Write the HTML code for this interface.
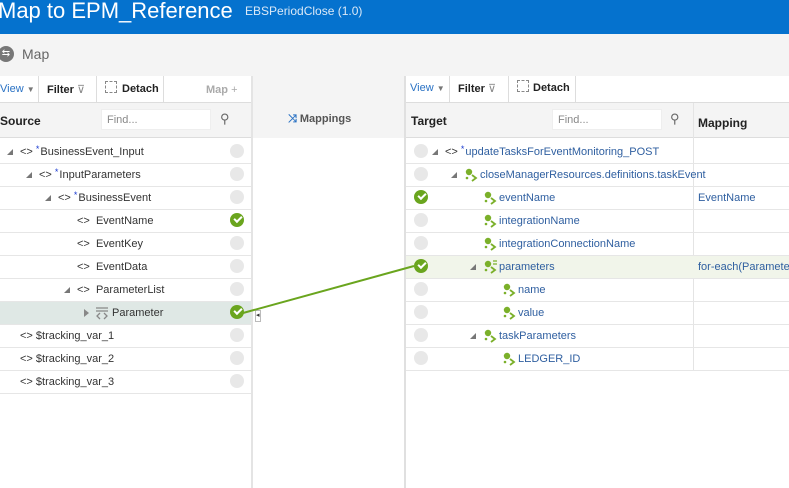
<!DOCTYPE html>
<html><head><style>
*{box-sizing:border-box;margin:0;padding:0}
body{width:789px;height:488px;overflow:hidden;background:#fff;font-family:"Liberation Sans",sans-serif;font-size:11px;color:#333;position:relative}
.a{position:absolute}
.hdr{left:0;top:0;width:789px;height:34px;background:#0572ce}
.row{position:absolute;height:23px;border-bottom:1px solid #e6e6e6}
.c{position:absolute;width:14px;height:14px;border-radius:50%;background:#e8e8e8}
.ok{background:#6aa51e}
.ok:after{content:"";position:absolute;left:4px;top:3px;width:6px;height:3px;border-left:2px solid #fff;border-bottom:2px solid #fff;transform:rotate(-45deg)}
.t{position:absolute;top:5px;white-space:nowrap}
.tri{position:absolute;top:8px;width:0;height:0;border-left:6px solid transparent;border-bottom:6px solid #777}
.b{color:#2f5fa0}
.st{color:#1a3bd1;font-size:9px;position:relative;top:-3px;margin-right:1px}
.gi{position:absolute;top:4px}
</style></head><body>
<svg width="0" height="0" style="position:absolute"><defs>
<g id="g"><circle cx="5" cy="4" r="3.2" fill="#7bb02a"/><circle cx="3" cy="10" r="1.3" fill="#7bb02a"/><path d="M8 7 L12 10 L8 13" fill="none" stroke="#7bb02a" stroke-width="1.8"/></g>
</defs></svg>
<div class="a hdr"></div>
<div class="a" style="left:-2px;top:-2px;color:#fff;font-size:22px">Map to EPM_Reference</div>
<div class="a" style="left:245px;top:4px;color:#dbe9f7;font-size:12px">EBSPeriodClose (1.0)</div>
<div class="a" style="left:0;top:34px;width:789px;height:42px;background:#f4f4f4"></div>
<div class="a" style="left:-2px;top:46px;width:16px;height:16px;border-radius:50%;background:#777;color:#fff;font-size:10px;text-align:center;line-height:16px">⇆</div>
<div class="a" style="left:22px;top:46px;font-size:14px;color:#666">Map</div>
<!-- left toolbar -->
<div class="a" style="left:0;top:76px;width:252px;height:27px;background:#fff;border-bottom:1px solid #ddd"></div>
<div class="a" style="left:0;top:83px;color:#2a72c4">View <span style="color:#777;font-size:8px">▼</span></div>
<div class="a" style="left:38px;top:76px;width:1px;height:27px;background:#ddd"></div>
<div class="a" style="left:47px;top:83px;font-weight:bold;color:#222">Filter <span style="color:#888;font-weight:normal">⊽</span></div>
<div class="a" style="left:96px;top:76px;width:1px;height:27px;background:#ddd"></div>
<div class="a" style="left:105px;top:81px;width:12px;height:12px;border:1px dashed #888"></div>
<div class="a" style="left:122px;top:83px;font-weight:bold;color:#222">Detach</div>
<div class="a" style="left:163px;top:76px;width:1px;height:27px;background:#ddd"></div>
<div class="a" style="left:206px;top:84px;font-weight:bold;color:#aaa">Map <span style="font-weight:normal">+</span></div>
<div class="a" style="left:0;top:103px;width:252px;height:35px;background:#f4f4f4;border-bottom:1px solid #ddd"></div>
<div class="a" style="left:0;top:114px;font-weight:bold;color:#222;font-size:12px">Source</div>
<div class="a" style="left:101px;top:109px;width:110px;height:21px;background:#fff;border:1px solid #eee;padding:4px 5px;color:#888">Find...</div>
<div class="a" style="left:220px;top:111px;color:#666;font-size:13px">⚲</div>
<div class="a" style="left:251px;top:76px;width:2px;height:412px;background:#e4e4e4"></div>
<!-- middle -->
<div class="a" style="left:253px;top:76px;width:152px;height:62px;background:#f4f4f4"></div>
<div class="a" style="left:288px;top:113px;font-weight:bold;color:#555"><span style="color:#2a72c4">⤨</span> Mappings</div>
<div class="a" style="left:404px;top:76px;width:2px;height:412px;background:#e0e0e0"></div>
<!-- right toolbar -->
<div class="a" style="left:406px;top:76px;width:383px;height:27px;background:#fff;border-bottom:1px solid #ddd"></div>
<div class="a" style="left:410px;top:82px;color:#2a72c4">View <span style="color:#777;font-size:8px">▼</span></div>
<div class="a" style="left:449px;top:76px;width:1px;height:27px;background:#ddd"></div>
<div class="a" style="left:458px;top:82px;font-weight:bold;color:#222">Filter <span style="color:#888;font-weight:normal">⊽</span></div>
<div class="a" style="left:508px;top:76px;width:1px;height:27px;background:#ddd"></div>
<div class="a" style="left:517px;top:80px;width:12px;height:12px;border:1px dashed #888"></div>
<div class="a" style="left:533px;top:82px;font-weight:bold;color:#222">Detach</div>
<div class="a" style="left:575px;top:76px;width:1px;height:27px;background:#ddd"></div>
<div class="a" style="left:406px;top:103px;width:383px;height:35px;background:#f4f4f4;border-bottom:1px solid #ddd"></div>
<div class="a" style="left:411px;top:114px;font-weight:bold;color:#222;font-size:12px">Target</div>
<div class="a" style="left:552px;top:109px;width:110px;height:21px;background:#fff;border:1px solid #eee;padding:4px 5px;color:#888">Find...</div>
<div class="a" style="left:670px;top:111px;color:#666;font-size:13px">⚲</div>
<div class="a" style="left:693px;top:103px;width:1px;height:267px;background:#e4e4e4"></div>
<div class="a" style="left:698px;top:116px;font-weight:bold;color:#222;font-size:12px">Mapping</div>

<!-- left rows -->
<div class="row" style="left:0;top:141px;width:251px"><div class="tri" style="left:7px"></div><div class="t" style="left:20px">&lt;&gt; <span class="st">*</span>BusinessEvent_Input</div><div class="c" style="left:230px;top:3px"></div></div>
<div class="row" style="left:0;top:164px;width:251px"><div class="tri" style="left:26px"></div><div class="t" style="left:39px">&lt;&gt; <span class="st">*</span>InputParameters</div><div class="c" style="left:230px;top:3px"></div></div>
<div class="row" style="left:0;top:187px;width:251px"><div class="tri" style="left:45px"></div><div class="t" style="left:58px">&lt;&gt; <span class="st">*</span>BusinessEvent</div><div class="c" style="left:230px;top:3px"></div></div>
<div class="row" style="left:0;top:210px;width:251px"><div class="t" style="left:77px">&lt;&gt; &nbsp;EventName</div><div class="c ok" style="left:230px;top:3px"></div></div>
<div class="row" style="left:0;top:233px;width:251px"><div class="t" style="left:77px">&lt;&gt; &nbsp;EventKey</div><div class="c" style="left:230px;top:3px"></div></div>
<div class="row" style="left:0;top:256px;width:251px"><div class="t" style="left:77px">&lt;&gt; &nbsp;EventData</div><div class="c" style="left:230px;top:3px"></div></div>
<div class="row" style="left:0;top:279px;width:251px"><div class="tri" style="left:64px"></div><div class="t" style="left:77px">&lt;&gt; &nbsp;ParameterList</div><div class="c" style="left:230px;top:3px"></div></div>
<div class="row" style="left:0;top:302px;width:251px;background:#dfe8e5"><div class="a" style="left:84px;top:7px;border-left:5px solid #888;border-top:4px solid transparent;border-bottom:4px solid transparent"></div>
<svg class="a" style="left:95px;top:4px" width="14" height="14"><path d="M1 2H13M1 5H13" stroke="#888" stroke-width="1.2"/><path d="M5 7L2 10L5 13M9 7L12 10L9 13" fill="none" stroke="#888" stroke-width="1.3"/></svg>
<div class="t" style="left:112px">Parameter</div><div class="c ok" style="left:230px;top:3px"></div></div>
<div class="row" style="left:0;top:325px;width:251px"><div class="t" style="left:20px">&lt;&gt; $tracking_var_1</div><div class="c" style="left:230px;top:3px"></div></div>
<div class="row" style="left:0;top:348px;width:251px"><div class="t" style="left:20px">&lt;&gt; $tracking_var_2</div><div class="c" style="left:230px;top:3px"></div></div>
<div class="row" style="left:0;top:371px;width:251px"><div class="t" style="left:20px">&lt;&gt; $tracking_var_3</div><div class="c" style="left:230px;top:3px"></div></div>
<div class="a" style="left:255px;top:310px;width:6px;height:12px;border:1px solid #bbb;background:#fff;font-size:7px;line-height:10px">◂</div>

<!-- right rows -->
<div class="row" style="left:406px;top:141px;width:383px"><div class="c" style="left:8px;top:3px"></div><div class="tri" style="left:26px"></div><div class="t" style="left:39px">&lt;&gt; <span class="b"><span class="st">*</span>updateTasksForEventMonitoring_POST</span></div></div>
<div class="row" style="left:406px;top:164px;width:383px"><div class="c" style="left:8px;top:3px"></div><div class="tri" style="left:45px"></div><svg class="gi" style="left:58px" width="14" height="14"><use href="#g"/></svg><div class="t b" style="left:74px">closeManagerResources.definitions.taskEvent</div></div>
<div class="row" style="left:406px;top:187px;width:383px"><div class="c ok" style="left:8px;top:3px"></div><svg class="gi" style="left:77px" width="14" height="14"><use href="#g"/></svg><div class="t b" style="left:93px">eventName</div><div class="t b" style="left:292px">EventName</div></div>
<div class="row" style="left:406px;top:210px;width:383px"><div class="c" style="left:8px;top:3px"></div><svg class="gi" style="left:77px" width="14" height="14"><use href="#g"/></svg><div class="t b" style="left:93px">integrationName</div></div>
<div class="row" style="left:406px;top:233px;width:383px"><div class="c" style="left:8px;top:3px"></div><svg class="gi" style="left:77px" width="14" height="14"><use href="#g"/></svg><div class="t b" style="left:93px">integrationConnectionName</div></div>
<div class="row" style="left:406px;top:256px;width:383px;background:#f1f5ea"><div class="c ok" style="left:8px;top:3px"></div><div class="tri" style="left:64px"></div><svg class="gi" style="left:77px" width="14" height="14"><use href="#g"/><path d="M10 1H14M10 4H14" stroke="#7bb02a" stroke-width="1.2"/></svg><div class="t b" style="left:93px">parameters</div><div class="t b" style="left:292px">for-each(Parameter)</div></div>
<div class="row" style="left:406px;top:279px;width:383px"><div class="c" style="left:8px;top:3px"></div><svg class="gi" style="left:96px" width="14" height="14"><use href="#g"/></svg><div class="t b" style="left:112px">name</div></div>
<div class="row" style="left:406px;top:302px;width:383px"><div class="c" style="left:8px;top:3px"></div><svg class="gi" style="left:96px" width="14" height="14"><use href="#g"/></svg><div class="t b" style="left:112px">value</div></div>
<div class="row" style="left:406px;top:325px;width:383px"><div class="c" style="left:8px;top:3px"></div><div class="tri" style="left:64px"></div><svg class="gi" style="left:77px" width="14" height="14"><use href="#g"/></svg><div class="t b" style="left:93px">taskParameters</div></div>
<div class="row" style="left:406px;top:348px;width:383px"><div class="c" style="left:8px;top:3px"></div><svg class="gi" style="left:96px" width="14" height="14"><use href="#g"/></svg><div class="t b" style="left:112px">LEDGER_ID</div></div>

<svg class="a" style="left:0;top:0" width="789" height="488"><line x1="243" y1="313" x2="414" y2="266" stroke="#6aa51e" stroke-width="2"/></svg>
</body></html>
